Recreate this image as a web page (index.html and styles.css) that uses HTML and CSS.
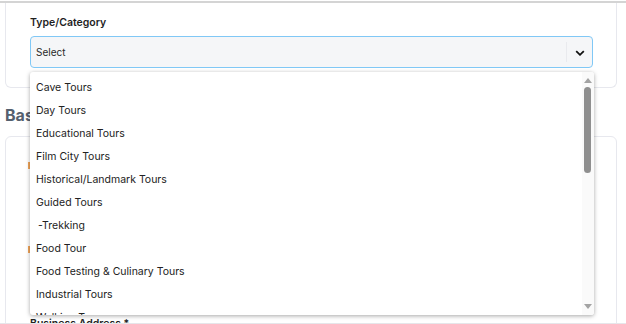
FILE: index.html
```html
<!DOCTYPE html>
<html lang="en">
<head>
    <meta charset="UTF-8">
    <meta name="viewport" content="width=device-width, initial-scale=1.0">
    <title>Listing Form</title>
    <link rel="stylesheet" href="styles.css">
</head>
<body>
    <div class="page">
        <div class="card card-top">
            <div class="field">
                <label class="label">Type/Category</label>
                <div class="select">
                    <span class="select-text">Select</span>
                    <span class="select-sep"></span>
                    <svg class="chevron" width="10" height="6" viewBox="0 0 10 6">
                        <path d="M1.2 1.2 L5 4.8 L8.8 1.2" fill="none" stroke="#111" stroke-width="1.8"/>
                    </svg>
                </div>
            </div>
        </div>

        <h2 class="section-title">Basic Information</h2>

        <div class="card card-basic">
            <div class="mark mark-one"></div>
            <div class="mark mark-two"></div>
            <div class="address-label">Business Address *</div>
        </div>

        <div class="dropdown">
            <ul class="options">
                <li>Cave Tours</li>
                <li>Day Tours</li>
                <li>Educational Tours</li>
                <li>Film City Tours</li>
                <li>Historical/Landmark Tours</li>
                <li>Guided Tours</li>
                <li class="sub">-Trekking</li>
                <li>Food Tour</li>
                <li>Food Testing &amp; Culinary Tours</li>
                <li>Industrial Tours</li>
                <li>Walking Tours</li>
            </ul>
            <div class="scrollbar">
                <span class="arrow arrow-up"></span>
                <span class="thumb"></span>
                <span class="arrow arrow-down"></span>
            </div>
        </div>
    </div>
</body>
</html>
```

FILE: styles.css
```css
body {
    margin: 0;
    background-color: #fff;
    font-family: Inter, "Noto Sans", Arial, sans-serif;
    color: #222;
    overflow: hidden;
}
.page {
    position: relative;
    height: 320px;
    border-top: 2px solid #d4d4d4;
    border-bottom: 1px solid #e6e6ea;
    margin-top: 1px;
    overflow: hidden;
}
.card {
    margin: 0 9px 0 5px;
    border: 1px solid #e7e8ee;
    border-radius: 6px;
    background-color: #fff;
}
.card-top {
    border-top: none;
    border-radius: 0 0 6px 6px;
    height: 84px;
}
.field {
    padding: 13px 23px 0 24px;
}
.label {
    display: block;
    font-size: 10.5px;
    font-weight: 600;
    color: #1f1f1f;
    height: 20px;
}
.select {
    display: flex;
    align-items: center;
    height: 30px;
    border: 1px solid #80c8f6;
    border-radius: 4px;
    background-color: #f5f6f8;
    padding: 0 0 0 5px;
}
.select-text {
    flex: 1;
    font-size: 10px;
    color: #2a2a2a;
}
.select-sep {
    width: 1px;
    height: 20px;
    background-color: #e9eaee;
}
.chevron {
    margin: 1px 7px 0 8px;
}
.section-title {
    margin: 17px 0 0 5px;
    font-size: 16px;
    font-weight: 700;
    color: #55606f;
    height: 28px;
}
.card-basic {
    position: relative;
    margin-top: 3px;
    height: 200px;
    border-radius: 6px 6px 0 0;
}
.mark {
    position: absolute;
    left: 22px;
    width: 2px;
    height: 7px;
    background-color: #f2a65a;
}
.mark-one {
    top: 25px;
}
.mark-two {
    top: 109px;
}
.address-label {
    position: absolute;
    left: 24px;
    top: 180px;
    font-size: 10.5px;
    font-weight: 600;
}
.dropdown {
    position: absolute;
    left: 30px;
    top: 69px;
    width: 564px;
    height: 243px;
    background-color: #fff;
    border-radius: 3px;
    box-shadow: 0 1px 4px rgba(0, 0, 0, 0.35);
    overflow: hidden;
    display: flex;
}
.options {
    flex: 1;
    list-style: none;
    margin: 0;
    padding: 4px 0 0 6px;
}
.options li {
    height: 23px;
    line-height: 23px;
    font-size: 10.5px;
    color: #222;
    white-space: nowrap;
}
.options li.sub {
    padding-left: 2px;
}
.scrollbar {
    position: relative;
    width: 12px;
    background-color: #fafafa;
}
.thumb {
    position: absolute;
    left: 2px;
    top: 15px;
    width: 7px;
    height: 86px;
    border-radius: 4px;
    background-color: #8f8f8f;
}
.arrow {
    position: absolute;
    left: 2px;
    width: 0;
    height: 0;
    border-left: 4px solid transparent;
    border-right: 4px solid transparent;
}
.arrow-up {
    top: 6px;
    border-bottom: 5px solid #a3a3a3;
}
.arrow-down {
    bottom: 6px;
    border-top: 5px solid #a3a3a3;
}
```
